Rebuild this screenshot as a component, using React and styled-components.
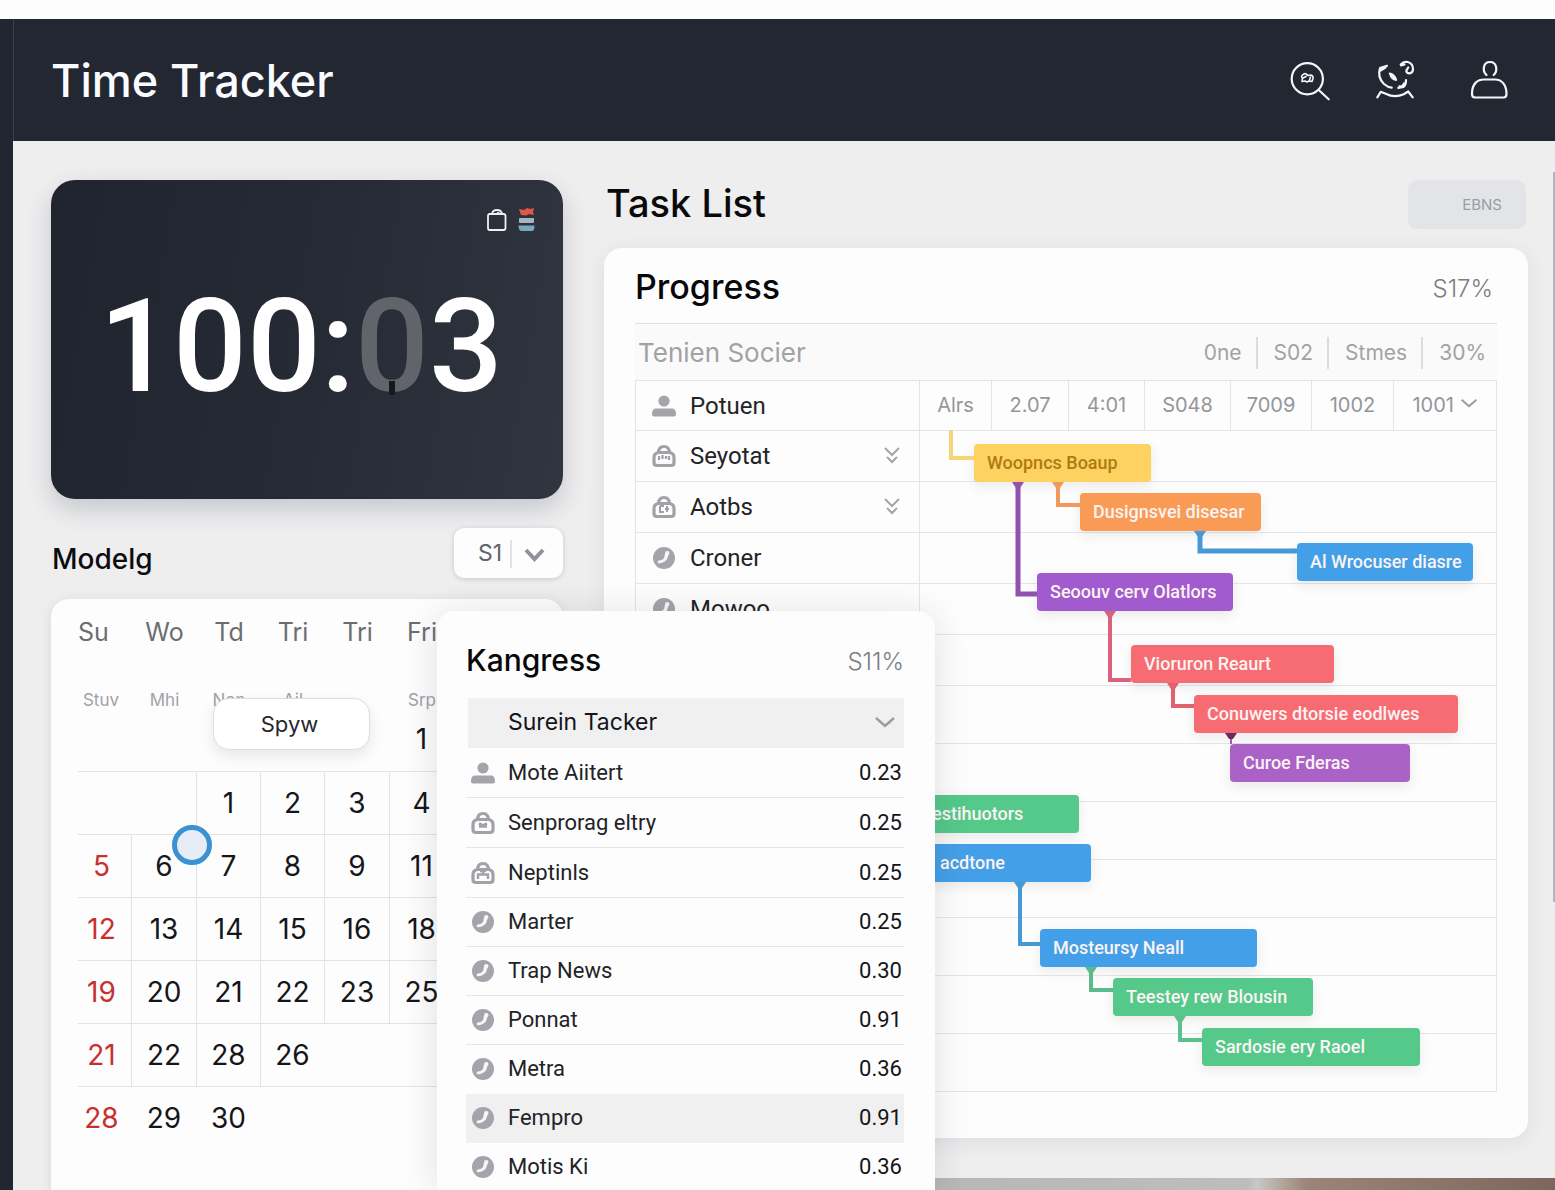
import React from "react";
import styled, { createGlobalStyle, css } from "styled-components";

const Global = createGlobalStyle`
  *, *::before, *::after { box-sizing: border-box; }
  html, body { margin: 0; padding: 0; }
  body { background: #fdfdfd; font-family: Inter, "Liberation Sans", sans-serif; color: #101114; }
  button, select { font: inherit; color: inherit; border: 0; background: none; padding: 0; margin: 0; cursor: pointer; }
  h1, h2, h3, p { margin: 0; font-weight: 500; }
  table { border-collapse: separate; border-spacing: 0; }
  th, td { padding: 0; font-weight: 400; }
`;

const Page = styled.div`
  position: relative;
  display: flex;
  flex-direction: column;
  height: 100vh;
  padding-top: 19px;
  overflow: hidden;
`;

const Shell = styled.div`
  flex: 1;
  min-height: 0;
  display: flex;
  background: #eeeeef;
`;

const Rail = styled.div`
  width: 13px;
  flex: none;
  background: #222630;
`;

const Body = styled.div`
  flex: 1;
  min-width: 0;
  display: flex;
  flex-direction: column;
`;

const Header = styled.header`
  flex: none;
  height: 122px;
  display: flex;
  align-items: center;
  justify-content: space-between;
  padding: 0 42px 0 37px;
  background: #222731;
  border-left: 1px solid #3a3f49;
  color: #fafbff;
`;

const AppTitle = styled.h1`
  padding-top: 2px;
  font-size: 45px;
  line-height: 56px;
  font-weight: 450;
`;

const HeaderActions = styled.div`
  display: flex;
  gap: 42px;
`;

const IconButton = styled.button`
  display: flex;
  width: 48px;
  height: 48px;
`;

const LineIcon = styled.svg`
  width: 48px;
  height: 48px;
  fill: none;
  stroke: #f4f6fa;
  stroke-width: 2.2;
  stroke-linecap: round;
  stroke-linejoin: round;
`;

const Main = styled.main`
  flex: 1;
  min-height: 0;
  display: grid;
  grid-template-columns: 550px minmax(0, 1fr);
`;

const SideColumn = styled.section`
  display: flex;
  flex-direction: column;
  padding: 39px 0 0 38px;
`;

const TimerCard = styled.div`
  flex: none;
  height: 319px;
  display: flex;
  flex-direction: column;
  padding: 27px 22px;
  border-radius: 24px;
  background: linear-gradient(100deg, #20242e 0%, #252a34 50%, #31353f 100%);
  box-shadow: 0 10px 24px rgba(40, 45, 70, 0.2);
`;

const TimerTools = styled.div`
  display: flex;
  justify-content: flex-end;
  gap: 8px;
  height: 24px;
`;

const ToolIcon = styled.svg`
  width: 24px;
  height: 24px;
  fill: none;
`;

const Digits = styled.div`
  display: flex;
  justify-content: center;
  padding: 36px 12px 0 0;
  font-family: Roboto, "Liberation Sans", sans-serif;
  font-size: 130px;
  line-height: 160px;
  font-weight: 500;
  color: #ffffff;
`;

const GhostDigit = styled.span`
  position: relative;
  color: #62646b;
  &::after {
    content: "";
    position: absolute;
    left: 34px;
    bottom: 32px;
    width: 6px;
    height: 14px;
    background: #15181d;
  }
`;

const SideHeading = styled.div`
  flex: none;
  display: flex;
  align-items: center;
  justify-content: space-between;
  height: 50px;
  margin: 29px 0 21px;
`;

const SideTitle = styled.h2`
  padding: 12px 0 0 1px;
  font-size: 28px;
  line-height: 36px;
  color: #0c0d10;
`;

const SelectBox = styled.div`
  position: relative;
  width: 109px;
  height: 50px;
`;

const PlainSelect = styled.select`
  appearance: none;
  width: 100%;
  height: 100%;
  padding-left: 24px;
  border-radius: 10px;
  background: #fdfdfe;
  box-shadow: 0 1px 5px rgba(40, 45, 60, 0.2);
  font-size: 23px;
  color: #62656b;
`;

const SelectMark = styled.svg`
  position: absolute;
  right: 0;
  top: 0;
  width: 60px;
  height: 50px;
  pointer-events: none;
  fill: none;
`;

const CalendarCard = styled.div`
  position: relative;
  flex: 1;
  padding: 8px 25px 0 27px;
  border-radius: 18px 18px 0 0;
  background: #fdfdfd;
  box-shadow: 0 2px 12px rgba(40, 45, 60, 0.1);
`;

const Calendar = styled.table`
  table-layout: fixed;
  width: 100%;
`;

const DayName = styled.th`
  height: ${(p) => (p.$sub ? 46 : 50)}px;
  padding-right: ${(p) => (p.$first ? (p.$sub ? 8 : 24) : 0)}px;
  font-size: ${(p) => (p.$sub ? 17 : 25)}px;
  color: ${(p) => (p.$sub ? "#a0a2a6" : "#6b6d71")};
  text-align: center;
  vertical-align: middle;
`;

const Spacer = styled.td`
  height: 20px;
`;

const Day = styled.td`
  height: ${(p) => (p.$lead ? 48 : 63)}px;
  padding-bottom: ${(p) => (p.$lead ? 16 : 0)}px;
  padding-right: ${(p) => (p.$sunday ? 6 : 0)}px;
  border-bottom: 1px solid ${(p) => (p.$last ? "transparent" : "#e3e3e4")};
  border-right: 1px solid ${(p) => (p.$line ? "#e3e3e4" : "transparent")};
  font-size: 28px;
  line-height: 32px;
  text-align: center;
  color: ${(p) => (p.$sunday ? "#c8302f" : "#15161a")};
`;

const Popover = styled.button`
  position: absolute;
  left: 162px;
  top: 99px;
  width: 157px;
  height: 52px;
  border: 1px solid #dcdddf;
  border-radius: 16px;
  background: #ffffff;
  box-shadow: 0 6px 14px rgba(40, 45, 60, 0.1);
  font-size: 22px;
  color: #26272b;
  padding-right: 4px;
`;

const Marker = styled.span`
  position: absolute;
  left: 121px;
  top: 226px;
  width: 40px;
  height: 40px;
  border: 5px solid #3c91d2;
  border-radius: 50%;
  background: #e7edf6;
`;

const WorkColumn = styled.section`
  display: flex;
  flex-direction: column;
  justify-content: space-between;
  min-width: 0;
`;

const Work = styled.div`
  padding: 39px 27px 0 41px;
`;

const WorkHeading = styled.div`
  display: flex;
  justify-content: space-between;
  height: 49px;
  margin-bottom: 19px;
  padding: 0 2px;
`;

const WorkTitle = styled.h2`
  font-size: 38px;
  line-height: 46px;
  color: #0a0a0c;
`;

const MutedButton = styled.button`
  width: 118px;
  height: 49px;
  padding-right: 24px;
  border-radius: 9px;
  background: #e3e4e8;
  text-align: right;
  font-size: 15px;
  color: #9b9da5;
`;

const Card = styled.div`
  height: 890px;
  padding: 0 31px;
  border-radius: 18px;
  background: #fdfdfd;
  box-shadow: 0 4px 20px rgba(40, 45, 60, 0.08);
`;

const CardHeading = styled.div`
  display: flex;
  align-items: center;
  justify-content: space-between;
  height: 75px;
  padding: 2px 4px 0 0;
`;

const CardTitle = styled.h3`
  font-size: ${(p) => (p.$small ? 30 : 34)}px;
  line-height: 44px;
  color: #08080a;
`;

const Percent = styled.span`
  padding-top: 4px;
  font-size: 24px;
  line-height: 32px;
  color: #7c7e83;
  font-weight: 300;
`;

const Band = styled.div`
  display: flex;
  align-items: center;
  justify-content: space-between;
  height: 57px;
  padding: 2px 11px 0 3px;
  border-top: 1px solid #e0e0e1;
  background: #fafafa;
  color: #a1a2a6;
`;

const BandTitle = styled.span`
  font-size: 26px;
  line-height: 32px;
`;

const BandItems = styled.div`
  display: flex;
`;

const BandItem = styled.span`
  padding-left: 16px;
  font-size: 21px;
  line-height: 32px;
  & + & {
    margin-left: 14px;
    border-left: 2px solid #dcdcde;
  }
`;

const Timeline = styled.div`
  position: relative;
`;

const Schedule = styled.table`
  table-layout: fixed;
  width: 100%;
  border: solid #e4e4e5;
  border-width: 1px 1px 0 1px;
`;

const HeadCell = styled.th`
  height: 50px;
  padding-bottom: ${(p) => (p.$first ? 0 : 2)}px;
  border-bottom: 1px solid #e4e4e5;
  border-left: ${(p) => (p.$first ? 0 : 1)}px solid #e4e4e5;
  font-size: 20px;
  color: #94969b;
  text-align: center;
  white-space: nowrap;
`;

const Cell = styled.td`
  height: ${(p) => (p.$tall ? 58 : 51)}px;
  border-bottom: 1px solid #e6e6e7;
  border-left: ${(p) => (p.$first ? 0 : 1)}px solid #e4e4e5;
`;

const Person = styled.div`
  display: flex;
  align-items: center;
  gap: ${(p) => (p.$tight ? 11 : 12)}px;
  padding-left: ${(p) => (p.$tight ? 3 : 14)}px;
  font-family: Roboto, "Liberation Sans", sans-serif;
  font-size: ${(p) => (p.$tight ? 22 : 24)}px;
  line-height: 32px;
  color: #222327;
  text-align: left;
`;

const PersonName = styled.span`
  flex: 1;
`;

const RowIcon = styled.svg`
  width: 28px;
  height: 28px;
  flex: none;
`;

const MoreButton = styled.button`
  display: flex;
  margin-right: 18px;
`;

const Canvas = styled.div`
  position: absolute;
  left: 284px;
  top: 50px;
  right: 0;
  bottom: 0;
`;

const Links = styled.svg`
  position: absolute;
  left: 0;
  top: 0;
  fill: none;
  pointer-events: none;
`;

const tones = {
  yellow: "#fdd261",
  orange: "#f99b55",
  blue: "#43a0e8",
  purple: "#a25bcf",
  red: "#f76c72",
  violet: "#ab62c6",
  green: "#54c98a",
};

const Bar = styled.button`
  position: absolute;
  left: ${(p) => p.$x}px;
  top: ${(p) => p.$y}px;
  width: ${(p) => p.$w}px;
  height: 38px;
  padding-left: 13px;
  border-radius: 4px;
  background: ${(p) => tones[p.$tone]};
  box-shadow: 0 4px 12px rgba(60, 60, 70, 0.1);
  font-family: Roboto, "Liberation Sans", sans-serif;
  font-size: 18px;
  line-height: 36px;
  font-weight: 500;
  text-align: left;
  white-space: nowrap;
  color: ${(p) => (p.$tone === "yellow" ? "#b07a12" : "#fdf3f4")};
`;

const FooterStrip = styled.div`
  height: 12px;
  background: linear-gradient(90deg, #b0b0b1 0%, #bdbdbd 69%, #c9c6c3 70%, #9a8578 75%, #7c675c 100%);
`;

const ScrollThumb = styled.div`
  position: absolute;
  right: 0;
  top: 172px;
  width: 2px;
  height: 730px;
  background: #b4b5be;
`;

const Panel = styled.aside`
  position: absolute;
  left: 437px;
  top: 611px;
  bottom: 0;
  width: 498px;
  padding: 0 31px 0 29px;
  overflow: hidden;
  border-radius: 18px 18px 0 0;
  background: #fdfdfd;
`;

const PanelShadow = styled.div`
  position: absolute;
  left: 437px;
  top: 611px;
  bottom: 0;
  width: 498px;
  border-radius: 18px;
  box-shadow: 0 4px 36px rgba(40, 45, 60, 0.14);
`;

const PanelHeading = styled.div`
  display: flex;
  align-items: center;
  justify-content: space-between;
  height: 87px;
  padding-top: 10px;
`;

const PanelPicker = styled.button`
  display: flex;
  align-items: center;
  justify-content: space-between;
  width: 100%;
  height: 50px;
  padding: 0 8px 2px 40px;
  border-left: 2px solid #fdfdfd;
  background: #f0f0f1;
  font-size: 23px;
  color: #141518;
`;

const Entries = styled.table`
  width: 100%;
`;

const EntryCell = styled.td`
  height: 49px;
  border-bottom: 1px solid #e6e6e7;
  font-family: Roboto, "Liberation Sans", sans-serif;
  font-size: 22px;
  line-height: 32px;
  tr:nth-child(-n + 3) & { height: 50px; }
  ${(p) =>
    p.$value &&
    css`
      padding-right: 2px;
      text-align: right;
      color: #141518;
    `}
  ${(p) => p.$plain && "border-bottom-color: transparent;"}
  ${(p) => p.$active && "background: #f0f0f1;"}
`;

function PersonGlyph() {
  return (
    <RowIcon viewBox="0 0 28 28" fill="#a3a5aa">
      <circle cx="14" cy="9" r="5.600" />
      <path d="M5 16.500h18q3 1 3 6 0 2-2 2H4q-2 0-2-2 0-5 3-6z" />
    </RowIcon>
  );
}

function BagGlyph({ variant }) {
  return (
    <RowIcon viewBox="0 0 28 28" fill="none" stroke="#a0a2a7">
      <path d="M8.500 11.500C8.500 6.500 10.500 4.500 14 4.500s5.500 2 5.500 7" strokeWidth="3.200" />
      <path d="M8 10.500h12q4 1 4 5v5q0 3-3 3H7q-3 0-3-3v-5q0-4 4-5z" strokeWidth="3.200" />
      {variant === "a" && <path d="M9 14v4M12.500 13v4M16 14v3M19 14v4" strokeWidth="2.200" />}
      {variant === "b" && <path d="M10 13v6h4M17 13v6M15 16h4M10 13h4" strokeWidth="2" />}
      {variant === "c" && <path d="M10 17.500h8M10 14.500l4 2 4-2" strokeWidth="2.600" />}
      {variant === "d" && <path d="M9 20v-4.500h10V20M11 12h6M14 12v4" strokeWidth="2.400" />}
    </RowIcon>
  );
}

function CallGlyph() {
  return (
    <RowIcon viewBox="0 0 28 28">
      <circle cx="14" cy="14" r="11" fill="#a3a5aa" />
      <path d="M15.500 7.500q4-1.500 4 2l-1.500 2.500q-.5 4-3.500 5.500-3.500 2.500-6.500 1.500-1-2 1-2.500l2.500-.5q3-1.500 3-4.500z" fill="#f6f6f7" />
    </RowIcon>
  );
}

function Glyph({ kind }) {
  if (kind === "person") return <PersonGlyph />;
  if (kind === "call") return <CallGlyph />;
  return <BagGlyph variant={kind} />;
}

function Chevron({ size = 22, color = "#9a9ca1" }) {
  return (
    <svg width={size} height={size} viewBox="0 0 22 22" fill="none" stroke={color} strokeWidth="2.400">
      <path d="M2 7l9 8 9-8M10 15l6-4" />
    </svg>
  );
}

const people = [
  { name: "Seyotat", kind: "a", more: true },
  { name: "Aotbs", kind: "b", more: true },
  { name: "Croner", kind: "call" },
  { name: "Mowoo", kind: "call" },
  {}, {}, {}, {}, {}, {}, {}, {},
];

const slots = [
  { label: "Alrs", w: 72 },
  { label: "2.07", w: 77 },
  { label: "4:01", w: 76 },
  { label: "S048", w: 86 },
  { label: "7009", w: 81 },
  { label: "1002", w: 82 },
  { label: "1001", w: undefined, more: true },
];

const bars = [
  { text: "Woopncs Boaup", x: 55, y: 14, w: 177, tone: "yellow" },
  { text: "Dusignsvei disesar", x: 161, y: 63, w: 181, tone: "orange" },
  { text: "Al Wrocuser diasre", x: 378, y: 113, w: 176, tone: "blue" },
  { text: "Seoouv cerv Olatlors", x: 118, y: 143, w: 196, tone: "purple" },
  { text: "Vioruron Reaurt", x: 212, y: 215, w: 203, tone: "red" },
  { text: "Conuwers dtorsie eodlwes", x: 275, y: 265, w: 264, tone: "red" },
  { text: "Curoe Fderas", x: 311, y: 314, w: 180, tone: "violet" },
  { text: "estihuotors", x: 0, y: 365, w: 160, tone: "green" },
  { text: "acdtone", x: 8, y: 414, w: 164, tone: "blue" },
  { text: "Mosteursy Neall", x: 121, y: 499, w: 217, tone: "blue" },
  { text: "Teestey rew Blousin", x: 194, y: 548, w: 200, tone: "green" },
  { text: "Sardosie ery Raoel", x: 283, y: 598, w: 218, tone: "green" },
];

const links = [
  { d: "M32 0V28H55", c: "#f6d478", w: 4 },
  { d: "M99 52V164H118", c: "#8f50ae", w: 5, cap: [99, 52] },
  { d: "M139 52V75H161", c: "#ef9a5c", w: 4, cap: [139, 52] },
  { d: "M281 101V121H378", c: "#4799d6", w: 5, cap: [281, 101] },
  { d: "M191 181V250H212", c: "#d9637c", w: 4, cap: [191, 181] },
  { d: "M254 254V276H275", c: "#e0626e", w: 4, cap: [254, 253] },
  { d: "M101 452V514H121", c: "#4799d6", w: 4, cap: [101, 452] },
  { d: "M172 537V560H194", c: "#5cba8c", w: 4, cap: [172, 537] },
  { d: "M261 586V610H283", c: "#5cc08c", w: 4, cap: [261, 586] },
  { d: "M312 303V314", c: "#9c5ab4", w: 2, cap: [312, 303], capColor: "#6e2c5c" },
];

const entries = [
  { name: "Mote Aiitert", value: "0.23", kind: "person" },
  { name: "Senprorag eltry", value: "0.25", kind: "c" },
  { name: "Neptinls", value: "0.25", kind: "d" },
  { name: "Marter", value: "0.25", kind: "call" },
  { name: "Trap News", value: "0.30", kind: "call" },
  { name: "Ponnat", value: "0.91", kind: "call" },
  { name: "Metra", value: "0.36", kind: "call", plain: true },
  { name: "Fempro", value: "0.91", kind: "call", active: true, plain: true },
  { name: "Motis Ki", value: "0.36", kind: "call", plain: true },
];

const weeks = [
  { days: ["", "", "1", "2", "3", "4", ""], lines: [1, 2, 3, 4, 5] },
  { days: ["5", "6", "7", "8", "9", "11", ""], lines: [0, 1, 2, 3, 4, 5] },
  { days: ["12", "13", "14", "15", "16", "18", ""], lines: [0, 1, 2, 3, 4, 5] },
  { days: ["19", "20", "21", "22", "23", "25", ""], lines: [0, 1, 2, 3, 4, 5] },
  { days: ["21", "22", "28", "26", "", "", ""], lines: [0, 1, 2] },
  { days: ["28", "29", "30", "", "", "", ""], lines: [], last: true },
];

function TopBar() {
  return (
    <Header>
      <AppTitle>Time Tracker</AppTitle>
      <HeaderActions>
        <IconButton aria-label="Search">
          <LineIcon viewBox="-1 0 48 48">
            <circle cx="21.300" cy="22.700" r="15.600" />
            <path d="M32.700 34l10 9.300" />
            <path d="M16 25.500l.5-3.500q-2-1 0-3 2-2 3.500-1l2 1.500 3-.5q2.500 1 2 3.500l-1 3-3-.5-2 1-2-1zM17 22l3-1.500M24.500 21l-1 3" strokeWidth="1.600" />
          </LineIcon>
        </IconButton>
        <IconButton aria-label="Activity">
          <LineIcon viewBox="5 0 48 48">
            <path d="M17 9.800L10 12c-2 6 0 12 4 16 3 2.500 5 3.500 7.700 3.700M10.500 14.500l5-3" />
            <path d="M19.700 17.300q5 1 6.600 6.700-5-.5-6.600-6.700zM22 19l3.500 4" strokeWidth="1.800" />
            <path d="M36 24q0 5-2.500 7l-5.200.8M34 27.500l-1.500 2.500-3 .3" />
            <path d="M30.700 8.500q3-3.500 7-2.500 5.500 1.500 5.300 7.500-.5 3.800-4 3.800-3-.5-2.600-3l1.800-2.800M31 9.500l3.500-1" />
            <path d="M7.300 41.300l3.400-5.500 5 2q9 4.500 18 .5l4.500-2.800 4.500 5.800" />
          </LineIcon>
        </IconButton>
        <IconButton aria-label="Account">
          <LineIcon viewBox="0 0 48 48">
            <path d="M21.500 19C17 15 18 6 25 6s8 9 3.700 13" />
            <path d="M10 41.500q-3 0-3-3.500c0-11 6-14.500 12-14.500h11c7 0 11.500 5.500 11.500 14.500q0 3.500-3 3.500z" />
          </LineIcon>
        </IconButton>
      </HeaderActions>
    </Header>
  );
}

function Timer() {
  return (
    <TimerCard>
      <TimerTools>
        <ToolIcon viewBox="0 0 24 24" stroke="#eef0f4" strokeWidth="1.800">
          <path d="M4.500 7h14q2 0 2 2v12q0 2-2 2h-14q-1.500 0-1.500-2V9q0-2 1.500-2zM7 7q.5-4 5-4t5 4M12 5.500l4 1.500" />
        </ToolIcon>
        <ToolIcon viewBox="0 0 24 24">
          <path d="M2 2l5 1 3-2 3 1 4-1-1 4 1 3-5-1-3 1.500L4 8z" fill="#e2574c" />
          <rect x="2" y="11" width="15" height="5" rx="1" fill="#a9b4bf" />
          <path d="M1.500 18.500h16q0 6-3 5.500H5q-3.500 0-3.500-5.500z" fill="#78a8bd" />
        </ToolIcon>
      </TimerTools>
      <Digits>
        <span>100:</span>
        <GhostDigit>0</GhostDigit>
        <span>3</span>
      </Digits>
    </TimerCard>
  );
}

function CalendarPanel() {
  return (
    <CalendarCard>
      <Calendar>
        <colgroup>
          <col style={{ width: 54 }} />
          <col style={{ width: 65 }} />
          <col style={{ width: 64 }} />
          <col style={{ width: 64 }} />
          <col style={{ width: 65 }} />
          <col style={{ width: 64 }} />
          <col />
        </colgroup>
        <thead>
          <tr>
            {["Su", "Wo", "Td", "Tri", "Tri", "Fri", ""].map((d, i) => (
              <DayName key={i} $first={i === 0}>{d}</DayName>
            ))}
          </tr>
          <tr><Spacer colSpan={7} /></tr>
          <tr>
            {["Stuv", "Mhi", "Non", "Ail", "", "Srp", ""].map((d, i) => (
              <DayName key={i} $sub $first={i === 0}>{d}</DayName>
            ))}
          </tr>
        </thead>
        <tbody>
          <tr>
            {["", "", "", "", "", "1", ""].map((d, i) => (
              <Day key={i} $lead>{d}</Day>
            ))}
          </tr>
          {weeks.map((w, r) => (
            <tr key={r}>
              {w.days.map((d, i) => (
                <Day key={i} $sunday={i === 0} $line={w.lines.includes(i)} $last={w.last}>{d}</Day>
              ))}
            </tr>
          ))}
        </tbody>
      </Calendar>
      <Popover>Spyw</Popover>
      <Marker />
    </CalendarCard>
  );
}

function TimelineChart() {
  return (
    <Timeline>
      <Schedule>
        <colgroup>
          <col style={{ width: 283 }} />
          {slots.map((s) => <col key={s.label} style={{ width: s.w }} />)}
        </colgroup>
        <thead>
          <tr>
            <HeadCell $first>
              <Person>
                <PersonGlyph />
                <PersonName>Potuen</PersonName>
              </Person>
            </HeadCell>
            {slots.map((s) => (
              <HeadCell key={s.label}>
                {s.label} {s.more && <Chevron size={18} />}
              </HeadCell>
            ))}
          </tr>
        </thead>
        <tbody>
          {people.map((p, i) => (
            <tr key={i}>
              <Cell $first $tall={i > 4}>
                {p.name && (
                  <Person>
                    <Glyph kind={p.kind} />
                    <PersonName>{p.name}</PersonName>
                    {p.more && (
                      <MoreButton aria-label={`Expand ${p.name}`}>
                        <svg width="18" height="20" viewBox="0 0 18 20" fill="none" stroke="#a3a5a9" strokeWidth="2">
                          <path d="M2 2l7 7 7-7M4 11l5 5 5-5" />
                        </svg>
                      </MoreButton>
                    )}
                  </Person>
                )}
              </Cell>
              <Cell $tall={i > 4} colSpan={7} />
            </tr>
          ))}
        </tbody>
      </Schedule>
      <Canvas>
        {bars.map((b) => (
          <Bar key={b.text} $x={b.x} $y={b.y} $w={b.w} $tone={b.tone}>{b.text}</Bar>
        ))}
        <Links width="577" height="662" viewBox="0 0 577 662">
          {links.map((l, i) => (
            <g key={i}>
              <path d={l.d} stroke={l.c} strokeWidth={l.w} />
              {l.cap && <path d={`M${l.cap[0] - 6} ${l.cap[1]}h12l-4 6h-4z`} fill={l.capColor || l.c} />}
            </g>
          ))}
        </Links>
      </Canvas>
    </Timeline>
  );
}

function SummaryPanel() {
  return (
    <Panel>
      <PanelHeading>
        <CardTitle $small>Kangress</CardTitle>
        <Percent>S11%</Percent>
      </PanelHeading>
      <PanelPicker>
        Surein Tacker
        <Chevron />
      </PanelPicker>
      <Entries>
        <tbody>
          {entries.map((e) => (
            <tr key={e.name}>
              <EntryCell $active={e.active} $plain={e.plain}>
                <Person $tight>
                  <Glyph kind={e.kind} />
                  <PersonName>{e.name}</PersonName>
                </Person>
              </EntryCell>
              <EntryCell $value $active={e.active} $plain={e.plain}>{e.value}</EntryCell>
            </tr>
          ))}
        </tbody>
      </Entries>
    </Panel>
  );
}

export default function App() {
  return (
    <>
      <Global />
      <Page>
        <Shell>
          <Rail />
          <Body>
            <TopBar />
            <Main>
              <SideColumn>
                <Timer />
                <SideHeading>
                  <SideTitle>Modelg</SideTitle>
                  <SelectBox>
                    <PlainSelect aria-label="Period" defaultValue="S1">
                      <option>S1</option>
                    </PlainSelect>
                    <SelectMark viewBox="0 0 60 50">
                      <path d="M8 12v28" stroke="#d8d9dc" strokeWidth="1.500" />
                      <path d="M23 22l8.500 9 8.500-9" stroke="#8f9299" strokeWidth="4" />
                    </SelectMark>
                  </SelectBox>
                </SideHeading>
                <CalendarPanel />
              </SideColumn>
              <WorkColumn>
                <Work>
                  <WorkHeading>
                    <WorkTitle>Task List</WorkTitle>
                    <MutedButton>EBNS</MutedButton>
                  </WorkHeading>
                  <Card>
                    <CardHeading>
                      <CardTitle>Progress</CardTitle>
                      <Percent>S17%</Percent>
                    </CardHeading>
                    <Band>
                      <BandTitle>Tenien Socier</BandTitle>
                      <BandItems>
                        <BandItem>0ne</BandItem>
                        <BandItem>S02</BandItem>
                        <BandItem>Stmes</BandItem>
                        <BandItem>30%</BandItem>
                      </BandItems>
                    </Band>
                    <TimelineChart />
                  </Card>
                </Work>
                <FooterStrip />
              </WorkColumn>
            </Main>
          </Body>
        </Shell>
        <ScrollThumb />
        <PanelShadow />
        <SummaryPanel />
      </Page>
    </>
  );
}
